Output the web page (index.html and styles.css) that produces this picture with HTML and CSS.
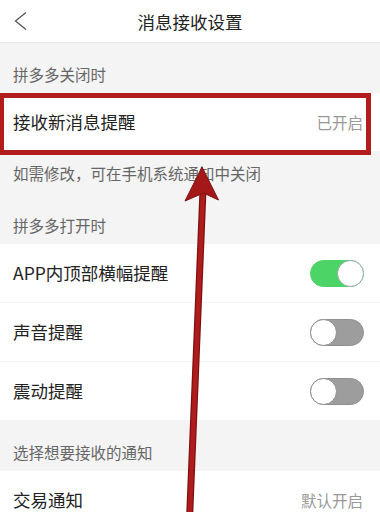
FILE: index.html
```html
<!DOCTYPE html>
<html lang="zh-CN">
<head>
<meta charset="utf-8">
<title>消息接收设置</title>
<link rel="stylesheet" href="styles.css">
</head>
<body>
<div class="page">
  <header class="nav">
    <svg class="back" width="16" height="20" viewBox="0 0 16 20"><path d="M13 1.5 L2.5 10 L13 18.5" fill="none" stroke="#555" stroke-width="1.3"/></svg>
    <h1 class="nav-title">消息接收设置</h1>
  </header>

  <div class="section-title">拼多多关闭时</div>
  <div class="row">
    <span class="label">接收新消息提醒</span>
    <span class="value">已开启</span>
  </div>
  <div class="note">如需修改，可在手机系统通知中关闭</div>

  <div class="section-title">拼多多打开时</div>
  <div class="row">
    <span class="label">APP内顶部横幅提醒</span>
    <span class="toggle on"><span class="knob"></span></span>
  </div>
  <div class="row">
    <span class="label">声音提醒</span>
    <span class="toggle"><span class="knob"></span></span>
  </div>
  <div class="row">
    <span class="label">震动提醒</span>
    <span class="toggle"><span class="knob"></span></span>
  </div>

  <div class="section-title">选择想要接收的通知</div>
  <div class="row">
    <span class="label">交易通知</span>
    <span class="value">默认开启</span>
  </div>

  <div class="highlight"></div>
  <svg class="arrow" width="380" height="512" viewBox="0 0 380 512">
    <path d="M189.5 520 L203 190" stroke="#7d1012" stroke-width="7" fill="none"/>
    <path d="M189.5 520 L203 190" stroke="#b01c1c" stroke-width="4.5" fill="none"/>
    <polygon points="202,167 218.5,200 203.5,193 185,201" fill="#a5181a" stroke="#7d1012" stroke-width="1"/>
  </svg>
</div>
</body>
</html>
```

FILE: styles.css
```css
* { box-sizing: border-box; }
html, body { margin: 0; padding: 0; }
body {
  background: #f4f4f4;
  font-family: "Noto Sans CJK SC", "Noto Sans", sans-serif;
  color: #222;
}
.page {
  position: relative;
  width: 380px;
  height: 512px;
  overflow: hidden;
  background: #f4f4f4;
}
.nav {
  position: relative;
  height: 43px;
  background: #fff;
  border-bottom: 1px solid #e6e6e6;
  display: flex;
  align-items: center;
  justify-content: center;
}
.back {
  position: absolute;
  left: 13px;
  top: 11px;
}
.nav-title {
  margin: 0;
  font-size: 17.5px;
  font-weight: 400;
  color: #222;
  line-height: 20px;
  margin-top: 2px;
}
.section-title {
  height: 50px;
  padding: 21px 13px 9px;
  font-size: 15.5px;
  line-height: 20px;
  color: #666;
}
.row {
  height: 59px;
  background: #fff;
  border-bottom: 1px solid #f4f4f4;
  display: flex;
  align-items: center;
  justify-content: space-between;
  padding: 0 16px 0 13px;
}
.label {
  font-size: 17.5px;
  color: #222;
  line-height: 22px;
}
.value {
  font-size: 15.5px;
  color: #999;
  margin-right: 1px;
}
.note {
  height: 42px;
  padding: 11px 13px 11px;
  font-size: 15.5px;
  line-height: 20px;
  color: #666;
}
.toggle {
  position: relative;
  width: 54px;
  height: 27px;
  border-radius: 14px;
  background: #9d9d9d;
  border: 1px solid #8f8f8f;
}
.toggle .knob {
  position: absolute;
  top: -1px;
  left: -1px;
  width: 27px;
  height: 27px;
  border-radius: 50%;
  background: #fff;
  border: 1px solid #8c8c8c;
}
.toggle.on {
  background: #4cd466;
  border-color: #4cd466;
}
.toggle.on .knob {
  left: auto;
  right: -1px;
  border-color: #9aa;
}
.highlight {
  position: absolute;
  left: -1px;
  top: 93px;
  width: 372px;
  height: 62px;
  border: 5px solid #b21d1c;
}
.arrow {
  position: absolute;
  left: 0;
  top: 0;
}
```
